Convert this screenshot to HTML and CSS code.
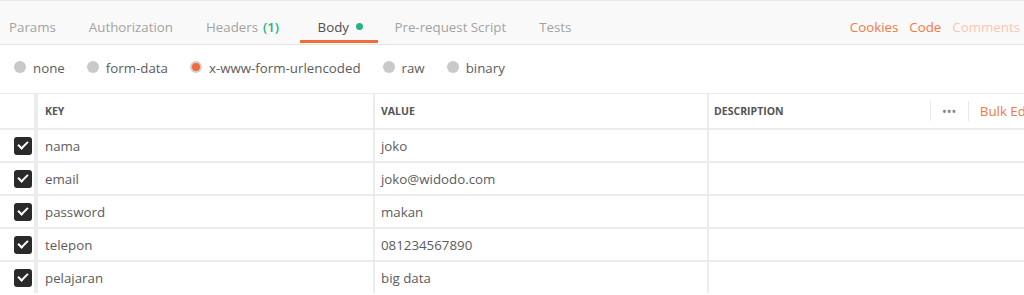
FILE: index.html
```html
<!DOCTYPE html>
<html lang="en">
<head>
    <meta charset="UTF-8">
    <title>Request Body</title>
    <link rel="stylesheet" href="styles.css">
</head>
<body>
    <div class="tabs">
        <div class="tab-list">
            <div class="tab">Params</div>
            <div class="tab">Authorization</div>
            <div class="tab">Headers <span class="count">(1)</span></div>
            <div class="tab active">Body <span class="dot"></span></div>
            <div class="tab">Pre-request Script</div>
            <div class="tab">Tests</div>
        </div>
        <div class="tab-links">
            <span class="link">Cookies</span>
            <span class="link">Code</span>
            <span class="link faded">Comments</span>
        </div>
    </div>

    <div class="body-modes">
        <label class="mode"><span class="radio"></span>none</label>
        <label class="mode"><span class="radio"></span>form-data</label>
        <label class="mode"><span class="radio checked"></span>x-www-form-urlencoded</label>
        <label class="mode"><span class="radio"></span>raw</label>
        <label class="mode"><span class="radio"></span>binary</label>
    </div>

    <div class="kv-table">
        <div class="row head">
            <div class="cell check"></div>
            <div class="cell">KEY</div>
            <div class="cell">VALUE</div>
            <div class="cell desc">
                <span>DESCRIPTION</span>
                <div class="head-actions">
                    <span class="more">&bull;&bull;&bull;</span>
                    <span class="bulk">Bulk Edit</span>
                </div>
            </div>
        </div>
        <div class="row">
            <div class="cell check"><span class="box"></span></div>
            <div class="cell">nama</div>
            <div class="cell">joko</div>
            <div class="cell"></div>
        </div>
        <div class="row">
            <div class="cell check"><span class="box"></span></div>
            <div class="cell">email</div>
            <div class="cell">joko@widodo.com</div>
            <div class="cell"></div>
        </div>
        <div class="row">
            <div class="cell check"><span class="box"></span></div>
            <div class="cell">password</div>
            <div class="cell">makan</div>
            <div class="cell"></div>
        </div>
        <div class="row">
            <div class="cell check"><span class="box"></span></div>
            <div class="cell">telepon</div>
            <div class="cell">081234567890</div>
            <div class="cell"></div>
        </div>
        <div class="row">
            <div class="cell check"><span class="box"></span></div>
            <div class="cell">pelajaran</div>
            <div class="cell">big data</div>
            <div class="cell"></div>
        </div>
    </div>
</body>
</html>
```

FILE: styles.css
```css
body {
    margin: 0;
    font-family: "Open Sans", "Noto Sans", sans-serif;
    font-size: 13.3px;
    color: #5c5c5c;
    background: #fff;
    overflow: hidden;
}
.tabs {
    display: flex;
    justify-content: space-between;
    height: 43px;
    background: #f9f9f9;
    border-top: 1px solid #e8e8e8;
    border-bottom: 1px solid #e4e4e4;
}
.tab-list {
    display: flex;
    margin-left: -7.5px;
}
.tab {
    display: flex;
    align-items: center;
    padding: 12px 16.5px 0;
    color: #a3a3a3;
    border-bottom: 3px solid transparent;
    margin-bottom: 1px;
}
.tab.active {
    color: #505050;
    border-bottom-color: #f26b3a;
    padding: 12px 15px 0 18px;
}
.count {
    color: #26b47f;
    font-weight: 600;
    margin-left: 5px;
    margin-right: 4px;
}
.dot {
    width: 7px;
    height: 7px;
    border-radius: 50%;
    background: #26b47f;
    margin-left: 7px;
    margin-bottom: 1px;
}
.tab-links {
    display: flex;
    align-items: center;
    gap: 11px;
    padding: 8px 4px 0 0;
}
.link {
    color: #f47845;
}
.link.faded {
    color: #fbc6b1;
}
.body-modes {
    display: flex;
    align-items: center;
    height: 46px;
    padding-left: 14px;
    padding-bottom: 2px;
    gap: 22px;
}
.mode {
    display: flex;
    align-items: center;
    gap: 7px;
}
.radio {
    width: 12px;
    height: 12px;
    border-radius: 50%;
    background: #c9c9c9;
    box-sizing: border-box;
    margin-bottom: 3px;
}
.radio.checked {
    background: #f26b3a;
    border: 2px solid #cfcfcf;
}
.row {
    display: grid;
    grid-template-columns: 36px 337px 334px 1fr;
    height: 31px;
    border-top: 2px solid #ececec;
}
.row.head {
    height: 34px;
    border-top-width: 1px;
}
.cell {
    display: flex;
    align-items: center;
    padding-left: 6px;
    border-left: 2px solid #ececec;
    white-space: nowrap;
}
.cell.check {
    border-left: none;
    border-right: 2px solid #ececec;
    padding-left: 14px;
}
.cell.check + .cell {
    padding-left: 7px;
}
.head .cell {
    font-size: 10.5px;
    font-weight: 700;
    color: #555;
}
.cell.desc {
    justify-content: space-between;
    padding-left: 5px;
}
.head-actions {
    display: flex;
    align-items: center;
    height: 100%;
}
.more {
    font-size: 10px;
    color: #8a8a8a;
    letter-spacing: 1px;
    padding: 0 11px 0 12px;
    border-left: 1px solid #e8e8e8;
    border-right: 1px solid #e8e8e8;
    line-height: 20px;
}
.bulk {
    font-size: 13.3px;
    font-weight: 400;
    color: #f47845;
    margin-left: 11px;
    margin-right: -10px;
}
.box {
    width: 18px;
    height: 18px;
    border-radius: 3px;
    background: #2a2a2a;
    position: relative;
}
.box::after {
    content: "";
    position: absolute;
    left: 4px;
    top: 4px;
    width: 8px;
    height: 4px;
    border-left: 2px solid #fff;
    border-bottom: 2px solid #fff;
    transform: rotate(-45deg);
}
```
